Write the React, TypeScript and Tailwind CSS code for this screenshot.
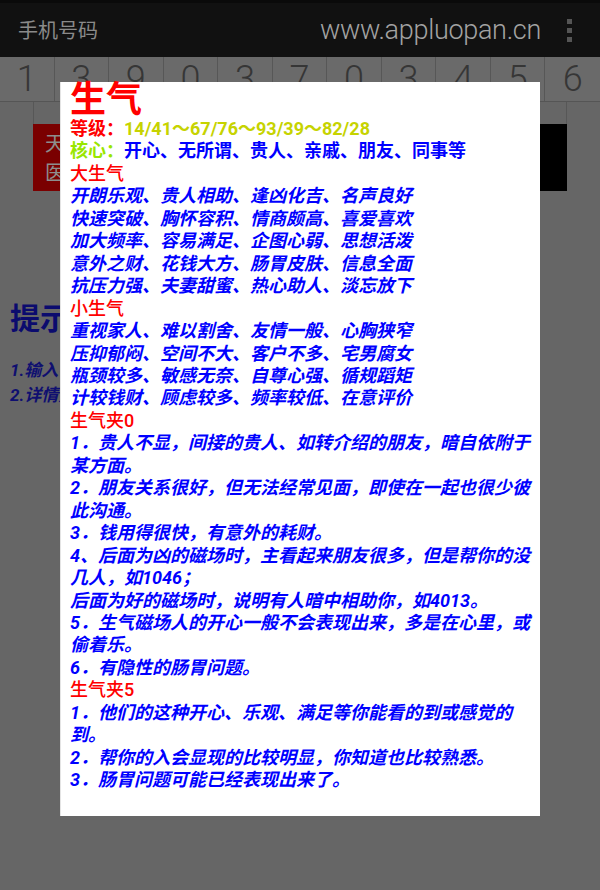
import React from "react";

const digits = ["1", "3", "9", "0", "3", "7", "0", "3", "4", "5", "6"];

const bigLines = [
  "开朗乐观、贵人相助、逢凶化吉、名声良好",
  "快速突破、胸怀容积、情商颇高、喜爱喜欢",
  "加大频率、容易满足、企图心弱、思想活泼",
  "意外之财、花钱大方、肠胃皮肤、信息全面",
  "抗压力强、夫妻甜蜜、热心助人、淡忘放下",
];

const smallLines = [
  "重视家人、难以割舍、友情一般、心胸狭窄",
  "压抑郁闷、空间不大、客户不多、宅男腐女",
  "瓶颈较多、敏感无奈、自尊心强、循规蹈矩",
  "计较钱财、顾虑较多、频率较低、在意评价",
];

const jia0 = [
  "1．贵人不显，间接的贵人、如转介绍的朋友，暗自依附于某方面。",
  "2．朋友关系很好，但无法经常见面，即使在一起也很少彼此沟通。",
  "3．钱用得很快，有意外的耗财。",
  "4、后面为凶的磁场时，主看起来朋友很多，但是帮你的没几人，如1046；",
  "后面为好的磁场时，说明有人暗中相助你，如4013。",
  "5．生气磁场人的开心一般不会表现出来，多是在心里，或偷着乐。",
  "6．有隐性的肠胃问题。",
];

const jia5 = [
  "1．他们的这种开心、乐观、满足等你能看的到或感觉的到。",
  "2．帮你的入会显现的比较明显，你知道也比较熟悉。",
  "3．肠胃问题可能已经表现出来了。",
];

function Header() {
  return (
    <div className="h-[57px] bg-[#111111] border-t-[3px] border-[#0a0a0a] flex items-center justify-between pl-[18px] pr-[28px]">
      <span className="text-[20px] text-[#8a8a8a] font-['Noto_Sans_CJK_SC',sans-serif]">
        手机号码
      </span>
      <div className="flex items-center gap-[26px]">
        <span className="text-[27px] text-[#a3a3a3] font-['Roboto',sans-serif] font-light tracking-[-0.3px]">
          www.appluopan.cn
        </span>
        <div className="flex flex-col gap-[4px]">
          <span className="w-[5px] h-[5px] bg-[#555555]" />
          <span className="w-[5px] h-[5px] bg-[#555555]" />
          <span className="w-[5px] h-[5px] bg-[#555555]" />
        </div>
      </div>
    </div>
  );
}

function DigitRow() {
  return (
    <div className="grid grid-cols-11 h-[45px] border-b border-[#555555] bg-[#6a6a6a]">
      {digits.map((d, i) => (
        <div
          key={i}
          className="flex items-center justify-center border-r border-[#575757] last:border-r-0 text-[36px] leading-none text-[#363636] font-['Roboto',sans-serif] font-light"
        >
          {d}
        </div>
      ))}
    </div>
  );
}

function Background() {
  return (
    <div className="flex flex-col">
      <Header />
      <DigitRow />
      <div className="mx-[33px] h-[22px] border-x border-[#575757]" />
      <div className="mx-[33px] h-[67px] flex">
        <div className="flex-1 bg-[#7a0000] flex flex-col justify-center gap-[9px] pl-[12px] text-[20px] leading-[20px] text-[#8d8d8d] font-['Noto_Sans_CJK_SC',sans-serif]">
          <span>天医磁场</span>
          <span>医生磁场</span>
        </div>
        <div className="w-[27px] bg-black" />
      </div>
      <div className="pl-[10px] pt-[110px] text-[30px] leading-[30px] font-bold text-[#0b0b6e] font-['Noto_Sans_CJK_SC',sans-serif]">
        提示
      </div>
      <div className="pl-[10px] pt-[27px] flex flex-col text-[17px] leading-[25px] italic font-bold text-[#0f0f70] font-['Roboto','Noto_Sans_CJK_SC',sans-serif]">
        <span>1.输入手机号码</span>
        <span>2.详情点击数字</span>
      </div>
    </div>
  );
}

function Section({ title, lines }: { title: string; lines: string[] }) {
  return (
    <>
      <div className="text-[#ff0000] font-medium">{title}</div>
      {lines.map((l, i) => (
        <div key={i} className="text-[#0000ff] font-bold italic">
          {l}
        </div>
      ))}
    </>
  );
}

function Dialog() {
  return (
    <div className="absolute left-[60px] top-[82px] w-[480px] h-[734px] bg-white border-l border-[#e4e4e4] pl-[9px] pr-[6px] font-['Roboto','Noto_Sans_CJK_SC',sans-serif]">
      <div className="text-[36px] leading-[36px] font-bold text-[#ff0000]">生气</div>
      <div className="text-[18px] leading-[22.45px]">
        <div className="font-bold">
          <span className="text-[#ff0000]">等级：</span>
          <span className="text-[#c6d300]">14/41～67/76～93/39～82/28</span>
        </div>
        <div className="font-bold">
          <span className="text-[#99e600]">核心：</span>
          <span className="text-[#0000ff]">开心、无所谓、贵人、亲戚、朋友、同事等</span>
        </div>
        <Section title="大生气" lines={bigLines} />
        <Section title="小生气" lines={smallLines} />
        <Section title="生气夹0" lines={jia0} />
        <Section title="生气夹5" lines={jia5} />
      </div>
    </div>
  );
}

export default function App() {
  return (
    <div className="relative w-[600px] h-[890px] bg-[#666666] overflow-hidden">
      <Background />
      <Dialog />
    </div>
  );
}
